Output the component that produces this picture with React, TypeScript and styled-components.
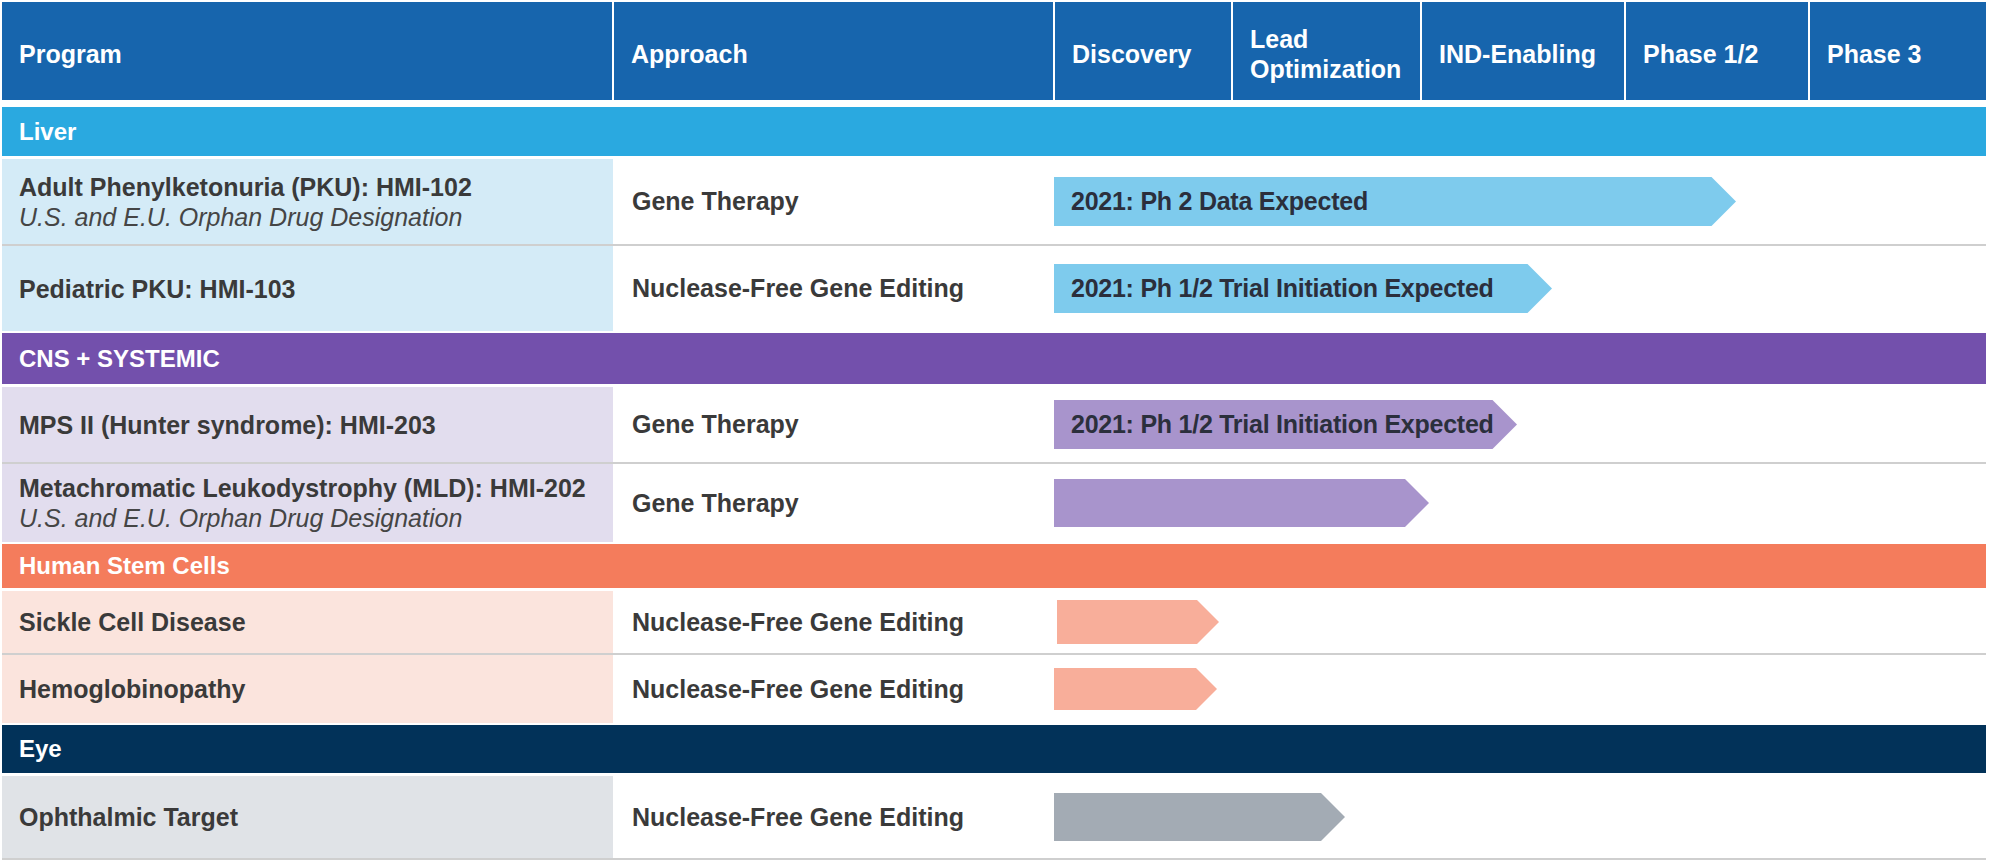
import styled, { createGlobalStyle } from "styled-components";

const GlobalStyle = createGlobalStyle`
  html, body {
    margin: 0;
    padding: 0;
    background: #ffffff;
  }
  body {
    font-family: "Liberation Sans", Arial, Helvetica, sans-serif;
  }
`;

const Table = styled.div`
  width: 1984px;
  margin: 2px 0 0 2px;
  display: flex;
  flex-direction: column;
`;

const HeaderRow = styled.div`
  display: grid;
  grid-template-columns: 610px 439px 176px 187px 202px 182px 176px;
  column-gap: 2px;
  height: 98px;
  margin-bottom: 7px;
`;

const HeaderCell = styled.div`
  background: #1765ad;
  color: #ffffff;
  font-weight: 700;
  font-size: 25px;
  line-height: 30px;
  display: flex;
  align-items: center;
  padding: 5px 4px 0 17px;
`;

const Group = styled.section`
  display: flex;
  flex-direction: column;
  margin-bottom: 2px;
`;

const Band = styled.div<{ $color: string; $height: number }>`
  background: ${(p) => p.$color};
  height: ${(p) => p.$height}px;
  margin-bottom: 3px;
  padding-left: 17px;
  display: flex;
  align-items: center;
  color: #ffffff;
  font-weight: 700;
  font-size: 24px;
`;

const Row = styled.div<{ $height: number; $divider: boolean }>`
  display: grid;
  grid-template-columns: 611px 441px 1fr;
  height: ${(p) => p.$height}px;
  border-bottom: ${(p) => (p.$divider ? "2px solid #cfcfcf" : "none")};
`;

const ProgramCell = styled.div<{ $tint: string }>`
  background: ${(p) => p.$tint};
  padding-left: 17px;
  display: flex;
  flex-direction: column;
  justify-content: center;
  color: #3a3a3a;
  font-size: 25px;
  line-height: 30px;
`;

const ProgramName = styled.div`
  font-weight: 700;
`;

const Designation = styled.div`
  font-style: italic;
  color: #454545;
`;

const ApproachCell = styled.div`
  padding-left: 19px;
  display: flex;
  align-items: center;
  color: #3a3a3a;
  font-weight: 700;
  font-size: 25px;
`;

const TimelineCell = styled.div`
  display: flex;
  align-items: center;
`;

const Arrow = styled.div<{ $color: string; $length: number; $height: number; $offset: number }>`
  width: ${(p) => p.$length}px;
  height: ${(p) => p.$height}px;
  margin-left: ${(p) => p.$offset}px;
  background: ${(p) => p.$color};
  clip-path: polygon(
    0 0,
    calc(100% - ${(p) => p.$height / 2}px) 0,
    100% 50%,
    calc(100% - ${(p) => p.$height / 2}px) 100%,
    0 100%
  );
  display: flex;
  align-items: center;
  padding-left: 17px;
  box-sizing: border-box;
  white-space: nowrap;
  color: #2b2f3c;
  font-weight: 700;
  font-size: 25px;
  letter-spacing: -0.25px;
`;

type Program = {
  name: string;
  designation?: string;
  approach: string;
  milestone?: string;
  length: number;
  arrowHeight: number;
  offset?: number;
  height: number;
};

type Category = {
  label: string;
  band: string;
  bandHeight: number;
  tint: string;
  arrow: string;
  programs: Program[];
};

const columns = [
  "Program",
  "Approach",
  "Discovery",
  "Lead Optimization",
  "IND-Enabling",
  "Phase 1/2",
  "Phase 3",
];

const orphan = "U.S. and E.U. Orphan Drug Designation";
const editing = "Nuclease-Free Gene Editing";
const trial = "2021: Ph 1/2 Trial Initiation Expected";

const categories: Category[] = [
  {
    label: "Liver",
    band: "#2aa9e0",
    bandHeight: 49,
    tint: "#d4ebf7",
    arrow: "#7ecbed",
    programs: [
      {
        name: "Adult Phenylketonuria (PKU): HMI-102",
        designation: orphan,
        approach: "Gene Therapy",
        milestone: "2021: Ph 2 Data Expected",
        length: 682,
        arrowHeight: 49,
        height: 85,
      },
      {
        name: "Pediatric PKU: HMI-103",
        approach: editing,
        milestone: trial,
        length: 498,
        arrowHeight: 49,
        height: 85,
      },
    ],
  },
  {
    label: "CNS + SYSTEMIC",
    band: "#7350ac",
    bandHeight: 51,
    tint: "#e2ddee",
    arrow: "#a894cc",
    programs: [
      {
        name: "MPS II (Hunter syndrome): HMI-203",
        approach: "Gene Therapy",
        milestone: trial,
        length: 463,
        arrowHeight: 49,
        height: 75,
      },
      {
        name: "Metachromatic Leukodystrophy (MLD): HMI-202",
        designation: orphan,
        approach: "Gene Therapy",
        length: 375,
        arrowHeight: 48,
        height: 78,
      },
    ],
  },
  {
    label: "Human Stem Cells",
    band: "#f47c5c",
    bandHeight: 44,
    tint: "#fbe4dd",
    arrow: "#f8ae9a",
    programs: [
      {
        name: "Sickle Cell Disease",
        approach: editing,
        length: 162,
        arrowHeight: 44,
        offset: 3,
        height: 62,
      },
      {
        name: "Hemoglobinopathy",
        approach: editing,
        length: 163,
        arrowHeight: 42,
        height: 68,
      },
    ],
  },
  {
    label: "Eye",
    band: "#023259",
    bandHeight: 48,
    tint: "#e0e3e7",
    arrow: "#a3abb4",
    programs: [
      {
        name: "Ophthalmic Target",
        approach: editing,
        length: 291,
        arrowHeight: 48,
        height: 82,
      },
    ],
  },
];

function App() {
  return (
    <>
      <GlobalStyle />
      <Table>
        <HeaderRow>
          {columns.map((c) => (
            <HeaderCell key={c}>{c}</HeaderCell>
          ))}
        </HeaderRow>
        {categories.map((cat, ci) => (
          <Group key={cat.label}>
            <Band $color={cat.band} $height={cat.bandHeight}>
              {cat.label}
            </Band>
            {cat.programs.map((p, i) => {
              const last = i === cat.programs.length - 1;
              const divider = !last || ci === categories.length - 1;
              return (
                <Row key={p.name} $height={p.height} $divider={divider}>
                  <ProgramCell $tint={cat.tint}>
                    <ProgramName>{p.name}</ProgramName>
                    {p.designation ? <Designation>{p.designation}</Designation> : null}
                  </ProgramCell>
                  <ApproachCell>{p.approach}</ApproachCell>
                  <TimelineCell>
                    <Arrow
                      $color={cat.arrow}
                      $length={p.length}
                      $height={p.arrowHeight}
                      $offset={p.offset ?? 0}
                    >
                      {p.milestone}
                    </Arrow>
                  </TimelineCell>
                </Row>
              );
            })}
          </Group>
        ))}
      </Table>
    </>
  );
}

export default App;
